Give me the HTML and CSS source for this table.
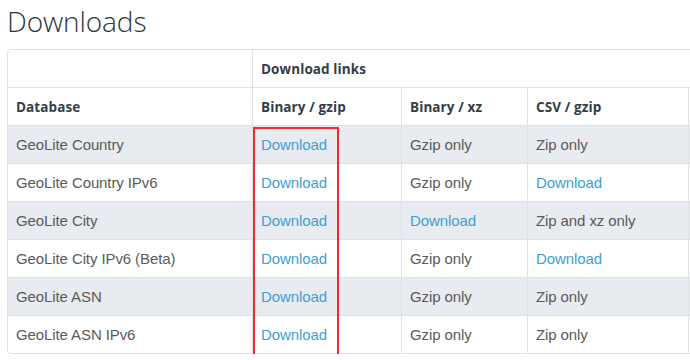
FILE: index.html
```html
<!DOCTYPE html>
<html lang="en">
  <head>
    <meta charset="UTF-8" />
    <meta name="viewport" content="width=device-width, initial-scale=1" />
    <title>Downloads</title>
    <link rel="stylesheet" href="styles.css">
  </head>
  <body>
    <div class="page">
      <h1>Downloads</h1>
      <div class="table-wrap">
        <table class="downloads">
          <colgroup>
            <col class="col-db" />
            <col class="col-bin-gz" />
            <col class="col-bin-xz" />
            <col class="col-csv-gz" />
            <col class="col-more" />
          </colgroup>
          <thead>
            <tr>
              <th></th>
              <th colspan="4">Download links</th>
            </tr>
            <tr>
              <th>Database</th>
              <th>Binary / gzip</th>
              <th>Binary / xz</th>
              <th>CSV / gzip</th>
              <th></th>
            </tr>
          </thead>
          <tbody>
            <tr>
              <td>GeoLite Country</td>
              <td><a href="#">Download</a></td>
              <td>Gzip only</td>
              <td>Zip only</td>
              <td></td>
            </tr>
            <tr>
              <td>GeoLite Country IPv6</td>
              <td><a href="#">Download</a></td>
              <td>Gzip only</td>
              <td><a href="#">Download</a></td>
              <td></td>
            </tr>
            <tr>
              <td>GeoLite City</td>
              <td><a href="#">Download</a></td>
              <td><a href="#">Download</a></td>
              <td>Zip and xz only</td>
              <td></td>
            </tr>
            <tr>
              <td>GeoLite City IPv6 (Beta)</td>
              <td><a href="#">Download</a></td>
              <td>Gzip only</td>
              <td><a href="#">Download</a></td>
              <td></td>
            </tr>
            <tr>
              <td>GeoLite ASN</td>
              <td><a href="#">Download</a></td>
              <td>Gzip only</td>
              <td>Zip only</td>
              <td></td>
            </tr>
            <tr>
              <td>GeoLite ASN IPv6</td>
              <td><a href="#">Download</a></td>
              <td>Gzip only</td>
              <td>Zip only</td>
              <td></td>
            </tr>
          </tbody>
        </table>
        <!-- highlight around the Binary / gzip links -->
        <div class="highlight"></div>
      </div>
    </div>
  </body>
</html>
```

FILE: styles.css
```css
:root {
  --text: #333d47;
  --cell-text: #5a5a5a;
  --link: #3d9fd6;
  --border: #dfe2e5;
  --stripe: #e8ebef;
  --mark: #f42a2a;
}
body {
  margin: 0;
  background: #fff;
  font-family: "Liberation Sans", Arial, sans-serif;
  color: var(--text);
  overflow: hidden;
}
.page {
  padding: 0 0 0 7px;
}
h1 {
  margin: 0;
  padding-top: 4px;
  height: 45px;
  font-family: "Open Sans", sans-serif;
  font-weight: 300;
  font-size: 28px;
  line-height: 34px;
  color: #2b3640;
  letter-spacing: -0.1px;
}
.table-wrap {
  position: relative;
  width: 830px;
}
.downloads {
  width: 830px;
  table-layout: fixed;
  border-collapse: separate;
  border-spacing: 0;
  border: 1px solid var(--border);
  border-radius: 4px;
}
.col-db { width: 244px; }
.col-bin-gz { width: 149px; }
.col-bin-xz { width: 126px; }
.col-csv-gz { width: 161px; }
.col-more { width: 150px; }
th,
td {
  text-align: left;
  padding: 0 8px;
  height: 37px;
  border-left: 1px solid var(--border);
  border-top: 1px solid var(--border);
  white-space: nowrap;
}
th:first-child,
td:first-child {
  border-left: none;
}
thead tr:first-child th {
  border-top: none;
}
th {
  font-family: "Open Sans", sans-serif;
  font-weight: 700;
  font-size: 13.5px;
  color: var(--text);
  letter-spacing: 0.1px;
}
td {
  font-size: 15px;
  color: var(--cell-text);
  letter-spacing: -0.1px;
}
tbody tr:nth-child(odd) td {
  background: var(--stripe);
}
a {
  color: var(--link);
  text-decoration: none;
}
.highlight {
  position: absolute;
  left: 246px;
  top: 78px;
  width: 82px;
  height: 225px;
  border: 2.5px solid var(--mark);
}
```
